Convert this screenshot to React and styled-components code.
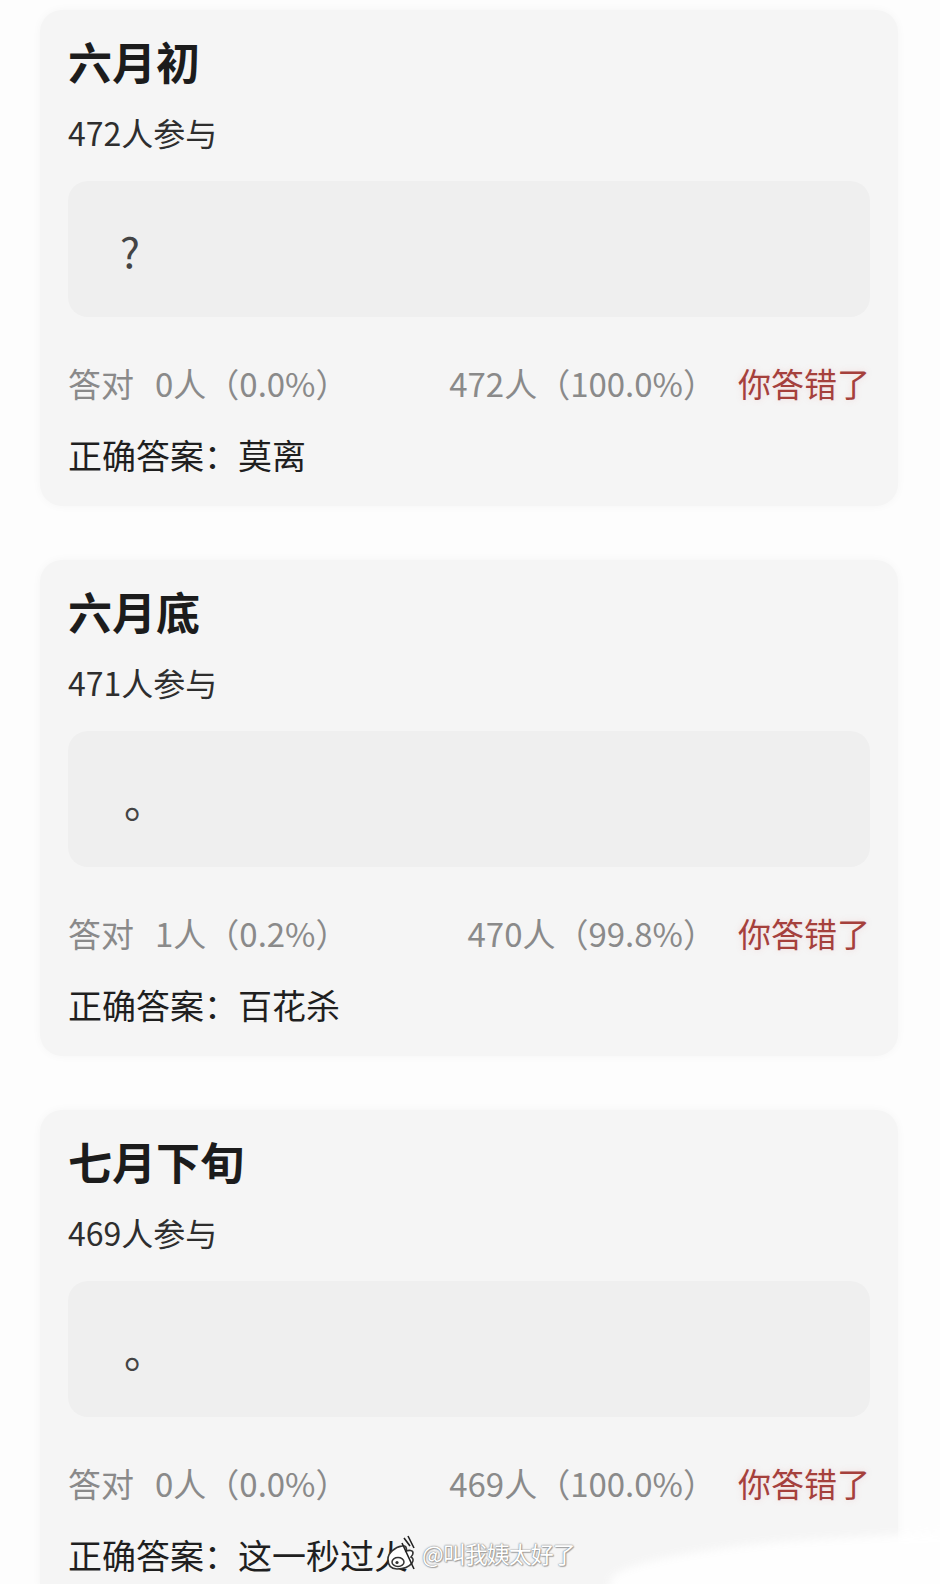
import React from "react";
import styled, { createGlobalStyle } from "styled-components";

const Global = createGlobalStyle`
  html, body { margin: 0; padding: 0; background: #fdfdfd; }
  body {
    width: 940px; height: 1584px; overflow: hidden;
    font-family: "Noto Sans CJK SC", "Noto Sans", sans-serif;
  }
`;

const Page = styled.div`
  position: relative;
  width: 940px;
  height: 1584px;
  overflow: hidden;
  box-sizing: border-box;
  padding: 10px 42px 0 40px;
  display: flex;
  flex-direction: column;
  gap: 54px;
  background: #fdfdfd;
`;

const Card = styled.section`
  flex: none;
  background: #f5f5f5;
  border-radius: 22px;
  box-shadow: 0 0 10px rgba(0, 0, 0, 0.035);
  padding: 29px 28px 27px;
  display: flex;
  flex-direction: column;
  height: 496px;
  box-sizing: border-box;
`;

const Title = styled.h2`
  margin: 0;
  font-size: 44px;
  line-height: 44px;
  font-weight: 700;
  color: #1c1c1c;
`;

const Joined = styled.div`
  margin-top: 29px;
  font-size: 32px;
  line-height: 40px;
  color: #2e2e2e;
`;

const QuestionBox = styled.div`
  margin-top: 29px;
  height: 136px;
  border-radius: 20px;
  background: #efefef;
  display: flex;
  align-items: center;
  padding-left: ${(p) => (p.$dot ? "56px" : "52px")};
  font-size: 42px;
  color: #444;
`;

const StatsRow = styled.div`
  margin-top: 44px;
  display: flex;
  justify-content: space-between;
  align-items: center;
  font-size: 33px;
  line-height: 44px;
  color: #8a8a8a;
`;

const Correct = styled.span`
  display: flex;
  align-items: center;
  gap: 21px;
`;

const RightGroup = styled.div`
  display: flex;
  align-items: center;
  gap: 22px;
`;

const Wrong = styled.span`
  color: #a5403c;
  text-shadow: 0 0 6px rgba(230, 140, 140, 0.25);
`;

const Answer = styled.div`
  margin-top: 28px;
  font-size: 34px;
  line-height: 44px;
  color: #1f1f1f;
`;

const Watermark = styled.div`
  position: absolute;
  left: 384px;
  top: 1535px;
  display: flex;
  align-items: center;
  gap: 4px;
  z-index: 2;
`;

const WmText = styled.span`
  font-size: 23px;
  color: #ffffff;
  letter-spacing: -1px;
  text-shadow: 0 0 1px #777, 0 0 2px #999, 1px 1px 1px #aaa;
`;

const Smear = styled.div`
  position: absolute;
  left: 610px;
  top: 1540px;
  width: 380px;
  height: 80px;
  background: #ffffff;
  border-radius: 60% 0 0 0 / 40% 0 0 0;
  transform: rotate(-3deg);
  filter: blur(4px);
  opacity: 0.9;
  z-index: 1;
`;

const data = [
  {
    title: "六月初",
    joined: "472人参与",
    q: "?",
    right: "0人（0.0%）",
    wrong: "472人（100.0%）",
    answer: "正确答案：莫离",
  },
  {
    title: "六月底",
    joined: "471人参与",
    q: "。",
    right: "1人（0.2%）",
    wrong: "470人（99.8%）",
    answer: "正确答案：百花杀",
  },
  {
    title: "七月下旬",
    joined: "469人参与",
    q: "。",
    right: "0人（0.0%）",
    wrong: "469人（100.0%）",
    answer: "正确答案：这一秒过火",
  },
];

function WeiboLogo() {
  return (
    <svg width="34" height="36" viewBox="0 0 34 36">
      <path
        d="M4 24c0-6 7-12 14-13 4-1 5 2 4 5 3-1 7-1 7 2 0 2-1 3-2 4 2 1 3 3 1 6-3 4-9 6-15 6-6 0-9-3-9-10z"
        fill="#fff"
        stroke="#333"
        strokeWidth="1.6"
      />
      <ellipse cx="14" cy="27" rx="6" ry="4.5" fill="none" stroke="#333" strokeWidth="1.5" />
      <circle cx="13" cy="27.5" r="1.6" fill="#333" />
      <path d="M20 3l6 8M24 1l6 12M18 8l12 26" stroke="#222" strokeWidth="1.6" fill="none" />
    </svg>
  );
}

export default function App() {
  return (
    <>
      <Global />
      <Page>
        {data.map((d) => (
          <Card key={d.title}>
            <Title>{d.title}</Title>
            <Joined>{d.joined}</Joined>
            <QuestionBox $dot={d.q === "。"}>{d.q}</QuestionBox>
            <StatsRow>
              <Correct>
                <span>答对</span>
                <span>{d.right}</span>
              </Correct>
              <RightGroup>
                <span>{d.wrong}</span>
                <Wrong>你答错了</Wrong>
              </RightGroup>
            </StatsRow>
            <Answer>{d.answer}</Answer>
          </Card>
        ))}
        <Smear />
        <Watermark>
          <WeiboLogo />
          <WmText>@叫我姨太好了</WmText>
        </Watermark>
      </Page>
    </>
  );
}
